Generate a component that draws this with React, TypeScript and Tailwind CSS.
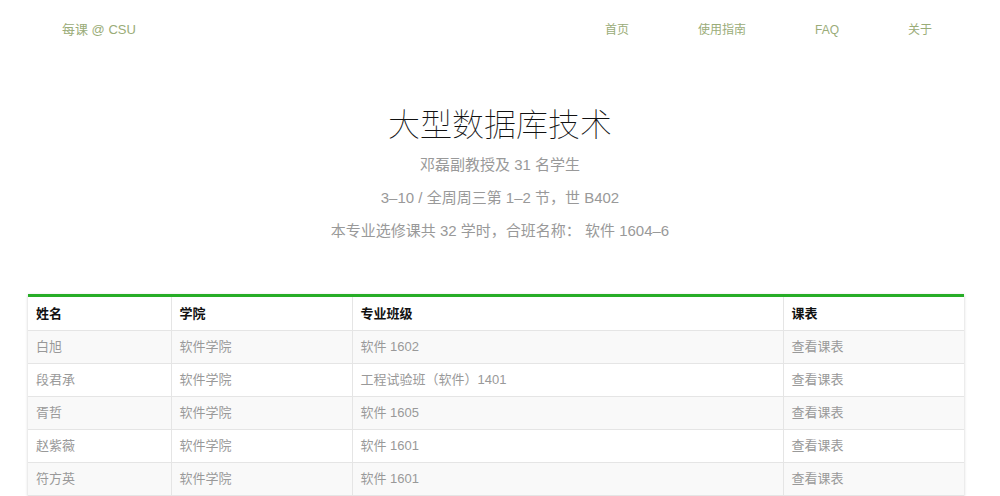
import React from "react";

const rows = [
  ["白旭", "软件学院", "软件 1602"],
  ["段君承", "软件学院", "工程试验班（软件）1401"],
  ["胥哲", "软件学院", "软件 1605"],
  ["赵紫薇", "软件学院", "软件 1601"],
  ["符方英", "软件学院", "软件 1601"],
];

export default function App() {
  return (
    <div
      className="w-[1000px] h-[496px] overflow-hidden bg-white"
      style={{ fontFamily: '"Liberation Sans", "Noto Sans CJK SC", sans-serif' }}
    >
      <header className="h-[59px] flex items-center justify-between pl-[62px] pr-[68px] text-[#9aac78]">
        <div className="text-[13px]">每课 @ CSU</div>
        <nav className="flex gap-[69px] text-[12px]">
          <a>首页</a>
          <a>使用指南</a>
          <a>FAQ</a>
          <a>关于</a>
        </nav>
      </header>
      <section className="flex flex-col items-center pt-[43px]">
        <h1
          className="text-[32px] leading-[40px] font-thin text-[#111]"
          style={{ fontFamily: '"Noto Sans CJK SC", sans-serif' }}
        >
          大型数据库技术
        </h1>
        <div className="mt-[6px] flex flex-col items-center text-[15px] leading-[33px] text-[#999]">
          <p>邓磊副教授及 31 名学生</p>
          <p>3–10 / 全周周三第 1–2 节，世 B402</p>
          <p>本专业选修课共 32 学时，合班名称： 软件 1604–6</p>
        </div>
      </section>
      <div className="ml-[28px] w-[936px] mt-[47px] border-t-[3px] border-[#27ad27] shadow-[0_1px_3px_rgba(0,0,0,0.2)]">
        <table className="w-full border-collapse text-[13px] table-fixed">
          <colgroup>
            <col className="w-[143px]" />
            <col className="w-[181px]" />
            <col className="w-[431px]" />
            <col className="w-[181px]" />
          </colgroup>
          <thead>
            <tr className="h-[33px] bg-white">
              {["姓名", "学院", "专业班级", "课表"].map((h, i) => (
                <th
                  key={h}
                  className={`text-left font-bold text-[#111] px-[8px] border-b border-[#e5e5e5] ${i < 3 ? "border-r" : ""}`}
                >
                  {h}
                </th>
              ))}
            </tr>
          </thead>
          <tbody>
            {rows.map((r, idx) => (
              <tr key={idx} className={`h-[33px] ${idx % 2 === 0 ? "bg-[#f9f9f9]" : "bg-white"}`}>
                <td className="px-[8px] text-[#999] border-b border-r border-[#e5e5e5]">{r[0]}</td>
                <td className="px-[8px] text-[#999] border-b border-r border-[#e5e5e5]">{r[1]}</td>
                <td className="px-[8px] text-[#999] border-b border-r border-[#e5e5e5]">{r[2]}</td>
                <td className="px-[8px] text-[#999] border-b border-[#e5e5e5]">查看课表</td>
              </tr>
            ))}
          </tbody>
        </table>
      </div>
    </div>
  );
}
